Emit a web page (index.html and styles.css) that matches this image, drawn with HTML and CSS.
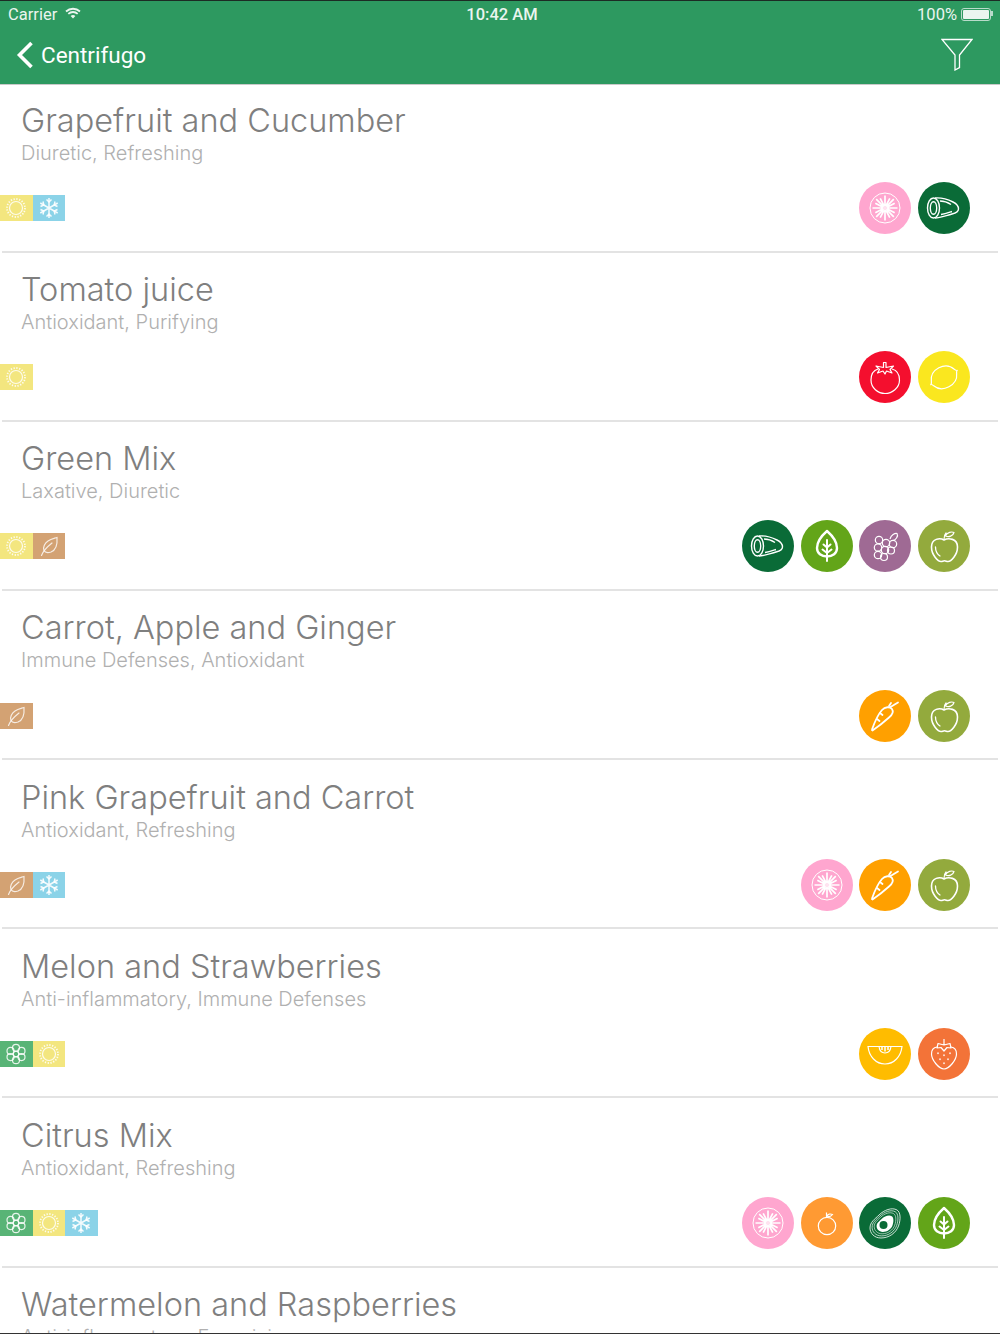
FILE: index.html
```html
<!DOCTYPE html>
<html lang="en">

<head>
    <meta charset="UTF-8">
    <title>Centrifugo</title>
    <link rel="stylesheet" href="styles.css">
</head>

<body>
    <svg class="sprites" xmlns="http://www.w3.org/2000/svg">
        <!-- fruit icons, 52x52 -->
        <symbol id="i-grapefruit" viewBox="0 0 52 52">
            <circle cx="26" cy="26" r="15" fill="none" stroke="#fff" stroke-width="1"/>
            <circle cx="26" cy="26" r="3" fill="#ffe3f0"/>
            <path fill="none" stroke="#fff" stroke-width="1.7" d="M26 24V13.500M26 28V38.500M24 26H13.500M28 26H38.500M24.600 24.600L17.200 17.200M27.400 27.400L34.800 34.800M27.400 24.600L34.800 17.200M24.600 27.400L17.200 34.800M25 23.600L21.200 16.300M27 28.400L30.800 35.700M27 23.600L30.800 16.300M25 28.400L21.200 35.700M23.600 25L16.300 21.200M28.400 27L35.700 30.800M23.600 27L16.300 30.800M28.400 25L35.700 21.200"/>
        </symbol>
        <symbol id="i-cucumber" viewBox="0 0 52 52">
            <g fill="none" stroke="#fff" stroke-width="1.400">
                <ellipse cx="15.500" cy="26" rx="6" ry="10"/>
                <ellipse cx="15.500" cy="26" rx="3.200" ry="6.300"/>
                <path d="M17 16C23 15.500 30 17.500 35 20C39 22 40.500 24.500 40.500 27C40.500 29.500 38 31 34 32C28 33.500 22 36 17 36"/>
                <path d="M22 19C26 19 30 20.500 33 22.500M23 32.500C27 32 31 30.500 34 29.500"/>
            </g>
        </symbol>
        <symbol id="i-tomato" viewBox="0 0 52 52">
            <g fill="none" stroke="#fff" stroke-width="1.200" stroke-linejoin="round">
                <path d="M19 18C14 19.500 12 24.500 12 29C12 37 19 42.500 26 42.500C33 42.500 40.500 37 40.500 29C40.500 24.500 38.500 19.500 33 18"/>
                <path d="M24.500 16.500V11.500H27V16.500L34.500 15L31 18.500L33 22L27.500 20L26 23L24 20L18.500 22L20.500 18.500L17 15Z"/>
            </g>
        </symbol>
        <symbol id="i-lemon" viewBox="0 0 52 52">
            <path fill="none" stroke="#fff" stroke-width="1.200" stroke-linejoin="round" transform="rotate(-28 26 26.500)" d="M11 26.500C12.500 26 12.500 25 13 24C15 18.500 20 15.500 26 15.500C32 15.500 37 18.500 39 24C39.500 25 39.500 26 41 26.500C39.500 27 39.500 28 39 29C37 34 32 37 26 37C20 37 15 34 13 29C12.500 28 12.500 27 11 26.500Z"/>
        </symbol>
        <symbol id="i-leaf" viewBox="0 0 52 52">
            <g fill="none" stroke="#fff" stroke-linecap="round" stroke-linejoin="round">
                <path stroke-width="2.400" d="M26 11C22 14.500 16 21 16 28C16 33.500 20.500 36.500 26 36.500C31.500 36.500 36 33.500 36 28C36 21 30 14.500 26 11Z"/>
                <path stroke-width="2" d="M26 20V41M26 33L21.500 29.500M26 33L30.500 29.500M26 27.500L22.500 24.500M26 27.500L29.500 24.500"/>
            </g>
        </symbol>
        <symbol id="i-grapes" viewBox="0 0 52 52">
            <g fill="none" stroke="#fff" stroke-width="1.200">
                <circle cx="20" cy="20" r="3.700"/>
                <circle cx="27" cy="23" r="3.700"/>
                <circle cx="34" cy="24" r="3.700"/>
                <circle cx="19" cy="27.500" r="3.700"/>
                <circle cx="26" cy="30" r="3.700"/>
                <circle cx="32" cy="30.500" r="3.500"/>
                <circle cx="19" cy="35" r="3.700"/>
                <circle cx="25" cy="37" r="3.500"/>
                <path d="M31 19C32 15 36 13 38 13.500C39.500 16 37 20 34 20.500"/>
            </g>
        </symbol>
        <symbol id="i-apple" viewBox="0 0 52 52">
            <g fill="none" stroke="#fff" stroke-linecap="round" stroke-linejoin="round">
                <path stroke-width="1.600" d="M26 20C22 17.500 13.500 18.500 13.500 27C13.500 35 20 41.500 23 41.500C24.500 41.500 25 40.800 26.500 40.800C28 40.800 28.500 41.500 30 41.500C33 41.500 39.500 35 39.500 27C39.500 18.500 30.500 17.500 26 20Z"/>
                <path stroke-width="1.200" d="M26 19.500C26 16.500 27 14 28 13M27.500 16C29 12 34 11.500 36 12.500C35 16 31 17.500 27.500 16Z"/>
                <path stroke-width="1.300" d="M17.500 27C17.500 31 19 34 22 36"/>
            </g>
        </symbol>
        <symbol id="i-carrot" viewBox="0 0 52 52">
            <g fill="none" stroke="#fff" stroke-width="1.800" stroke-linecap="round" stroke-linejoin="round">
                <path d="M13.500 40.500C13 40.500 12.800 40 13 39.500C16 31 19.500 24 23 20C26 16.500 31 16.500 33 19C35 22 33 25 30 27.500C25 32 18 37.500 13.500 40.500Z"/>
                <path d="M31.500 17L39 12.500M30 16L32 13"/>
                <path d="M21 23L23.500 25M18 29L20.500 31"/>
            </g>
        </symbol>
        <symbol id="i-melon" viewBox="0 0 52 52">
            <g fill="none" stroke="#fff" stroke-width="1.200">
                <path d="M9 18.500H43C42 28.500 35 36 26 36C17 36 10 28.500 9 18.500Z"/>
                <path d="M20 18.500C20.500 22.500 23 25 26 25C29 25 31.500 22.500 32 18.500"/>
                <path d="M23 19V22M26 19V23.500M29 19V22" stroke-width="1.500"/>
            </g>
        </symbol>
        <symbol id="i-strawberry" viewBox="0 0 52 52">
            <g fill="none" stroke="#fff" stroke-width="1.200" stroke-linejoin="round">
                <path d="M19 19C15 19.500 13.500 23 13.500 26C13.500 32 21 41 26 41C31 41 38.500 32 38.500 26C38.500 23 37 19.500 33 19"/>
                <path d="M26 17V11M26 17L20 15.500L19 20L23 19.500L26 23L29 19.500L33 20L32 15.500Z"/>
                <path stroke-width="1.500" stroke-linecap="round" d="M20 25V25.500M26 27V27.500M32 25V25.500M22 31V31.500M30 31V31.500M26 35V35.500"/>
            </g>
        </symbol>
        <symbol id="i-orange" viewBox="0 0 52 52">
            <g fill="none" stroke="#fff" stroke-width="1.200">
                <circle cx="26" cy="29" r="8.700"/>
                <path d="M25.500 20V15.500M26 19C27 17 29.500 16.500 31.500 17.500C30 19.500 28 20 26 19Z"/>
            </g>
        </symbol>
        <symbol id="i-avocado" viewBox="0 0 52 52">
            <g fill="none" stroke="#fff" stroke-width=".8">
                <path d="M38 13C41.500 15 42 22 39.500 29C37 36 30 41 22 41C15 41 11 36 11 31C11 25 16 22 20 18C25 13 33 10 38 13Z"/>
                <path transform="translate(26 26) scale(.86) translate(-26 -26)" d="M38 13C41.500 15 42 22 39.500 29C37 36 30 41 22 41C15 41 11 36 11 31C11 25 16 22 20 18C25 13 33 10 38 13Z"/>
                <path transform="translate(26 26) scale(.72) translate(-26 -26)" d="M38 13C41.500 15 42 22 39.500 29C37 36 30 41 22 41C15 41 11 36 11 31C11 25 16 22 20 18C25 13 33 10 38 13Z"/>
            </g>
            <path fill="#fff" transform="translate(26 26.500) scale(.56) translate(-26 -26)" d="M38 13C41.500 15 42 22 39.500 29C37 36 30 41 22 41C15 41 11 36 11 31C11 25 16 22 20 18C25 13 33 10 38 13Z"/>
            <circle cx="24.500" cy="28" r="4" fill="#0a6b37"/>
        </symbol>
        <!-- season tags, 24x24 -->
        <symbol id="t-sun" viewBox="0 0 24 24">
            <circle cx="12" cy="12" r="6.500" fill="none" stroke="#fff" stroke-opacity=".85" stroke-width="1.200"/>
            <circle cx="12" cy="12" r="9" fill="none" stroke="#fff" stroke-opacity=".85" stroke-width="1.800" stroke-dasharray="1.300 1.530"/>
        </symbol>
        <symbol id="t-snow" viewBox="0 0 24 24">
            <g fill="none" stroke="#fff" stroke-opacity=".9" stroke-width="1.500">
                <path d="M12 2V22M3.300 7L20.700 17M3.300 17L20.700 7"/>
                <path d="M9.500 3.500L12 6L14.500 3.500M9.500 20.500L12 18L14.500 20.500M3.500 10.500L6.800 9L6 5.500M20.500 13.500L17.200 15L18 18.500M3.500 13.500L6.800 15L6 18.500M20.500 10.500L17.200 9L18 5.500"/>
            </g>
        </symbol>
        <symbol id="t-leaf" viewBox="0 0 24 24">
            <g fill="none" stroke="#fff" stroke-opacity=".8" stroke-width="1.200" stroke-linecap="round">
                <path d="M20 3.500C20.500 10 19 16 14 18C11 19 8 18.500 7 16.500C5.500 13 8 9 11 7C14 5 17 4.500 20 3.500Z"/>
                <path d="M4.500 21.500C6 17 10 13 15 9"/>
            </g>
        </symbol>
        <symbol id="t-flower" viewBox="0 0 24 24">
            <g fill="none" stroke="#fff" stroke-opacity=".85" stroke-width="1.200">
                <circle cx="12" cy="12" r="2.800"/>
                <circle cx="12" cy="5.800" r="3.500"/>
                <circle cx="12" cy="18.200" r="3.500"/>
                <circle cx="6.500" cy="8.900" r="3.500"/>
                <circle cx="17.500" cy="8.900" r="3.500"/>
                <circle cx="6.500" cy="15.100" r="3.500"/>
                <circle cx="17.500" cy="15.100" r="3.500"/>
            </g>
        </symbol>
    </svg>

    <div class="screen">
        <header class="topbar">
            <div class="status">
                <div class="status-left">
                    <span>Carrier</span>
                    <svg class="wifi" width="16" height="12" viewBox="0 0 16 12">
                        <path fill="none" stroke="#fff" stroke-width="1.800" d="M1 4.500C5 .8 11 .8 15 4.500M3.300 6.800C6 4.400 10 4.400 12.700 6.800"/>
                        <path fill="#fff" d="M5.600 9C7 7.800 9 7.800 10.400 9L8 11.500Z"/>
                    </svg>
                </div>
                <span class="status-time">10:42 AM</span>
                <div class="status-right">
                    <span>100%</span>
                    <span class="battery"><i></i></span>
                </div>
            </div>
            <nav class="navrow">
                <a class="back">
                    <svg width="18" height="28" viewBox="0 0 18 28">
                        <path fill="none" stroke="#fff" stroke-width="3.600" d="M15.500 2L3.500 14L15.500 26"/>
                    </svg>
                    <span>Centrifugo</span>
                </a>
                <svg class="filter" width="32" height="33" viewBox="0 0 32 33">
                    <path fill="none" stroke="#fff" stroke-width="1.300" d="M1 1.500H31L18.500 17V29.500L14 32V17Z"/>
                </svg>
            </nav>
        </header>

        <ul class="list">
            <li class="row">
                <h2>Grapefruit and Cucumber</h2>
                <p>Diuretic, Refreshing</p>
                <div class="row-foot">
                    <div class="tags">
                        <span class="tag sun"><svg><use href="#t-sun"/></svg></span>
                        <span class="tag snow"><svg><use href="#t-snow"/></svg></span>
                    </div>
                    <div class="fruits">
                        <svg class="fruit pink"><use href="#i-grapefruit"/></svg>
                        <svg class="fruit dark"><use href="#i-cucumber"/></svg>
                    </div>
                </div>
            </li>
            <li class="row">
                <h2>Tomato juice</h2>
                <p>Antioxidant, Purifying</p>
                <div class="row-foot">
                    <div class="tags">
                        <span class="tag sun"><svg><use href="#t-sun"/></svg></span>
                    </div>
                    <div class="fruits">
                        <svg class="fruit red"><use href="#i-tomato"/></svg>
                        <svg class="fruit yellow"><use href="#i-lemon"/></svg>
                    </div>
                </div>
            </li>
            <li class="row">
                <h2>Green Mix</h2>
                <p>Laxative, Diuretic</p>
                <div class="row-foot">
                    <div class="tags">
                        <span class="tag sun"><svg><use href="#t-sun"/></svg></span>
                        <span class="tag autumn"><svg><use href="#t-leaf"/></svg></span>
                    </div>
                    <div class="fruits">
                        <svg class="fruit dark"><use href="#i-cucumber"/></svg>
                        <svg class="fruit leafy"><use href="#i-leaf"/></svg>
                        <svg class="fruit purple"><use href="#i-grapes"/></svg>
                        <svg class="fruit olive"><use href="#i-apple"/></svg>
                    </div>
                </div>
            </li>
            <li class="row">
                <h2>Carrot, Apple and Ginger</h2>
                <p>Immune Defenses, Antioxidant</p>
                <div class="row-foot">
                    <div class="tags">
                        <span class="tag autumn"><svg><use href="#t-leaf"/></svg></span>
                    </div>
                    <div class="fruits">
                        <svg class="fruit amber"><use href="#i-carrot"/></svg>
                        <svg class="fruit olive"><use href="#i-apple"/></svg>
                    </div>
                </div>
            </li>
            <li class="row">
                <h2>Pink Grapefruit and Carrot</h2>
                <p>Antioxidant, Refreshing</p>
                <div class="row-foot">
                    <div class="tags">
                        <span class="tag autumn"><svg><use href="#t-leaf"/></svg></span>
                        <span class="tag snow"><svg><use href="#t-snow"/></svg></span>
                    </div>
                    <div class="fruits">
                        <svg class="fruit pink"><use href="#i-grapefruit"/></svg>
                        <svg class="fruit amber"><use href="#i-carrot"/></svg>
                        <svg class="fruit olive"><use href="#i-apple"/></svg>
                    </div>
                </div>
            </li>
            <li class="row">
                <h2>Melon and Strawberries</h2>
                <p>Anti-inflammatory, Immune Defenses</p>
                <div class="row-foot">
                    <div class="tags">
                        <span class="tag spring"><svg><use href="#t-flower"/></svg></span>
                        <span class="tag sun"><svg><use href="#t-sun"/></svg></span>
                    </div>
                    <div class="fruits">
                        <svg class="fruit melon"><use href="#i-melon"/></svg>
                        <svg class="fruit coral"><use href="#i-strawberry"/></svg>
                    </div>
                </div>
            </li>
            <li class="row">
                <h2>Citrus Mix</h2>
                <p>Antioxidant, Refreshing</p>
                <div class="row-foot">
                    <div class="tags">
                        <span class="tag spring"><svg><use href="#t-flower"/></svg></span>
                        <span class="tag sun"><svg><use href="#t-sun"/></svg></span>
                        <span class="tag snow"><svg><use href="#t-snow"/></svg></span>
                    </div>
                    <div class="fruits">
                        <svg class="fruit pink"><use href="#i-grapefruit"/></svg>
                        <svg class="fruit tangerine"><use href="#i-orange"/></svg>
                        <svg class="fruit dark"><use href="#i-avocado"/></svg>
                        <svg class="fruit leafy"><use href="#i-leaf"/></svg>
                    </div>
                </div>
            </li>
            <li class="row">
                <h2>Watermelon and Raspberries</h2>
                <p>Anti-inflammatory, Energizing</p>
            </li>
        </ul>
    </div>
</body>

</html>
```

FILE: styles.css
```css
:root {
    --green: #2d9960;
    --line: #e3e3e3;
    --title: #7f7f7f;
    --subtitle: #b0b0b0;
}

html,
body {
    margin: 0;
    padding: 0;
    background-color: #ffffff;
}

.sprites {
    display: none;
}

.screen {
    height: 1334px;
    overflow: hidden;
    box-sizing: border-box;
    border-top: 1px solid #1c2b24;
    border-bottom: 1px solid #333333;
}

.topbar {
    height: 84px;
    box-sizing: border-box;
    background-color: var(--green);
    border-bottom: 1px solid #c9c9c9;
    color: #ffffff;
    font-family: Roboto, sans-serif;
}

.status {
    display: grid;
    grid-template-columns: 1fr auto 1fr;
    align-items: center;
    height: 27px;
    padding: 0 9px 0 8px;
    font-size: 16.5px;
    opacity: .9;
}

.status-left,
.status-right {
    display: flex;
    align-items: center;
}

.status-left {
    gap: 8px;
}

.status-right {
    justify-content: flex-end;
    gap: 4px;
}

.status-time {
    margin-left: 5px;
    font-weight: 500;
}

.wifi {
    margin-top: -3px;
}

.battery {
    position: relative;
    box-sizing: border-box;
    width: 30px;
    height: 13px;
    padding: 1px;
    border: 1px solid #c9e3d6;
    border-radius: 3px;
}

.battery i {
    display: block;
    height: 100%;
    background-color: #ffffff;
    border-radius: 1px;
}

.battery::after {
    content: "";
    position: absolute;
    top: 2px;
    right: -3px;
    width: 2px;
    height: 5px;
    background-color: #c9e3d6;
}

.navrow {
    display: flex;
    justify-content: space-between;
    align-items: center;
    height: 55px;
    padding: 0 27px 0 16px;
}

.back {
    display: flex;
    align-items: center;
    gap: 7px;
    margin-top: -2px;
    font-size: 22.5px;
}

.filter {
    margin-top: -3px;
}

.list {
    list-style: none;
    margin: 0;
    padding: 0;
}

.row {
    position: relative;
    display: flex;
    flex-direction: column;
    box-sizing: border-box;
    height: 169.17px;
    padding: 16px 30px 20px 0;
    font-family: Inter, sans-serif;
}

.row::after {
    content: "";
    position: absolute;
    left: 2px;
    right: 2px;
    bottom: 1.5px;
    height: 2px;
    background-color: var(--line);
}

.row h2 {
    margin: 0 0 0 21px;
    color: var(--title);
    font-size: 32.5px;
    line-height: 39px;
    font-weight: 300;
}

.row p {
    margin: 0 0 0 21px;
    color: var(--subtitle);
    font-size: 20px;
    line-height: 26px;
    font-weight: 300;
}

.row-foot {
    display: flex;
    justify-content: space-between;
    align-items: center;
    margin-top: auto;
}

.tags {
    display: flex;
}

.tag {
    display: flex;
    justify-content: center;
    align-items: center;
    width: 32.5px;
    height: 26px;
}

.tag svg {
    width: 24px;
    height: 24px;
}

.sun { background-color: #f3e67f; }
.snow { background-color: #8bd3e8; }
.autumn { background-color: #d3a273; }
.spring { background-color: #58b476; }

.fruits {
    display: flex;
    gap: 6.6px;
}

.fruit {
    width: 52px;
    height: 52px;
    border-radius: 50%;
}

.pink { background-color: #ffa6cf; }
.dark { background-color: #0a6b37; }
.red { background-color: #f40f2e; }
.yellow { background-color: #fae71f; }
.leafy { background-color: #63a519; }
.purple { background-color: #9f6a94; }
.olive { background-color: #93aa3d; }
.amber { background-color: #ffa000; }
.melon { background-color: #ffbc00; }
.coral { background-color: #f37338; }
.tangerine { background-color: #ff9a33; }
```
